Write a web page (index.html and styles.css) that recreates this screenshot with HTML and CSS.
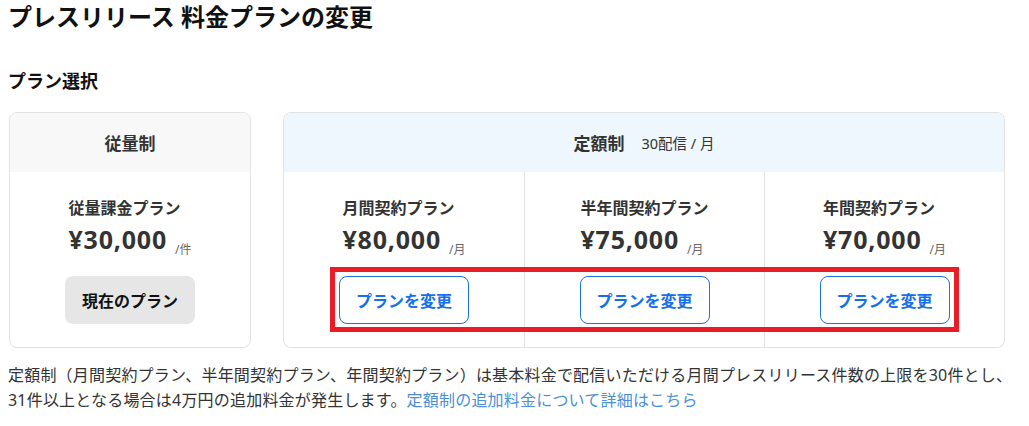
FILE: index.html
```html
<!DOCTYPE html>
<html lang="ja">
<head>
<meta charset="utf-8">
<title>プレスリリース 料金プランの変更</title>
<link rel="stylesheet" href="styles.css">
</head>
<body>
<h1 class="page-title">プレスリリース 料金プランの変更</h1>
<h2 class="section-title">プラン選択</h2>
<div class="plans">
  <section class="card card-usage">
    <div class="card-head head-gray">
      <span class="head-title">従量制</span>
    </div>
    <div class="card-cols">
      <div class="plan-col">
        <div class="plan-info">
          <div class="plan-name">従量課金プラン</div>
          <div class="plan-price">¥30,000<span class="unit">/件</span></div>
        </div>
        <button class="btn btn-current" type="button">現在のプラン</button>
      </div>
    </div>
  </section>
  <section class="card card-fixed">
    <div class="card-head head-blue">
      <span class="head-title">定額制</span>
      <span class="head-sub">30配信 / 月</span>
    </div>
    <div class="card-cols cols-3">
      <div class="plan-col">
        <div class="plan-info">
          <div class="plan-name">月間契約プラン</div>
          <div class="plan-price">¥80,000<span class="unit">/月</span></div>
        </div>
        <button class="btn btn-change" type="button">プランを変更</button>
      </div>
      <div class="plan-col">
        <div class="plan-info">
          <div class="plan-name">半年間契約プラン</div>
          <div class="plan-price">¥75,000<span class="unit">/月</span></div>
        </div>
        <button class="btn btn-change" type="button">プランを変更</button>
      </div>
      <div class="plan-col">
        <div class="plan-info">
          <div class="plan-name">年間契約プラン</div>
          <div class="plan-price">¥70,000<span class="unit">/月</span></div>
        </div>
        <button class="btn btn-change" type="button">プランを変更</button>
      </div>
    </div>
  </section>
  <div class="highlight" aria-hidden="true"></div>
</div>
<p class="note">定額制（月間契約プラン、半年間契約プラン、年間契約プラン）は基本料金で配信いただける月間プレスリリース件数の上限を30件とし、31件以上となる場合は4万円の追加料金が発生します。<a class="note-link" href="#">定額制の追加料金について詳細はこちら</a></p>
</body>
</html>
```
FILE: styles.css
```css
* { box-sizing: border-box; }

html, body {
  margin: 0;
  padding: 0;
  background: #ffffff;
}

body {
  padding: 0 8px;
  font-family: "Noto Sans", "Noto Sans CJK JP", sans-serif;
  color: #333333;
}

.page-title {
  margin: 0;
  font-size: 24px;
  line-height: 34px;
  font-weight: 700;
  color: #111111;
}

.section-title {
  margin: 34px 0 17px;
  font-size: 18px;
  line-height: 27px;
  font-weight: 700;
  color: #111111;
}

.plans {
  position: relative;
  display: grid;
  grid-template-columns: 242px 722px;
  column-gap: 32px;
  margin-left: 1px;
}

.card {
  border: 1px solid #e2e2e2;
  border-radius: 8px;
  overflow: hidden;
  background: #ffffff;
}

.card-head {
  height: 59px;
  display: flex;
  align-items: center;
  justify-content: center;
  gap: 17px;
}

.head-gray { background: #f8f8f8; }
.head-blue { background: #edf7fd; }

.head-title {
  font-size: 17px;
  font-weight: 700;
  color: #333333;
}

.head-sub {
  font-size: 14.5px;
  color: #333333;
}

.card-cols {
  display: grid;
  grid-template-columns: 1fr;
}

.cols-3 {
  grid-template-columns: repeat(3, 1fr);
}

.plan-col {
  display: flex;
  flex-direction: column;
  align-items: center;
  padding: 24px 0 23px;
}

.cols-3 .plan-col + .plan-col {
  border-left: 1px solid #e2e2e2;
}

.plan-info {
  display: flex;
  flex-direction: column;
  align-items: flex-start;
}

.plan-name {
  font-size: 16px;
  line-height: 24px;
  font-weight: 700;
  color: #333333;
}

.plan-price {
  font-size: 25px;
  line-height: 38px;
  letter-spacing: 0.8px;
  font-weight: 700;
  color: #333333;
  white-space: nowrap;
}

.unit {
  margin-left: 8px;
  font-size: 12px;
  line-height: 12px;
  letter-spacing: 0;
  font-weight: 400;
  color: #666666;
  vertical-align: -5px;
}

.btn {
  margin-top: 18px;
  width: 130px;
  height: 48px;
  border-radius: 8px;
  font-family: "Noto Sans", "Noto Sans CJK JP", sans-serif;
  font-size: 16px;
  font-weight: 700;
  padding: 0;
  cursor: pointer;
}

.btn-current {
  background: #e6e6e6;
  border: 0;
  color: #111111;
}

.btn-change {
  background: #ffffff;
  border: 1px solid #1a73e8;
  color: #1470ee;
}

.highlight {
  position: absolute;
  left: 321px;
  top: 155px;
  width: 629px;
  height: 65px;
  border: 5px solid #ea1d27;
  pointer-events: none;
}

.note {
  margin: 15px 0 0;
  font-size: 16px;
  line-height: 25px;
  letter-spacing: 0.2px;
  color: #333333;
}

.note-link {
  color: #4a8fd8;
  text-decoration: none;
}
```
